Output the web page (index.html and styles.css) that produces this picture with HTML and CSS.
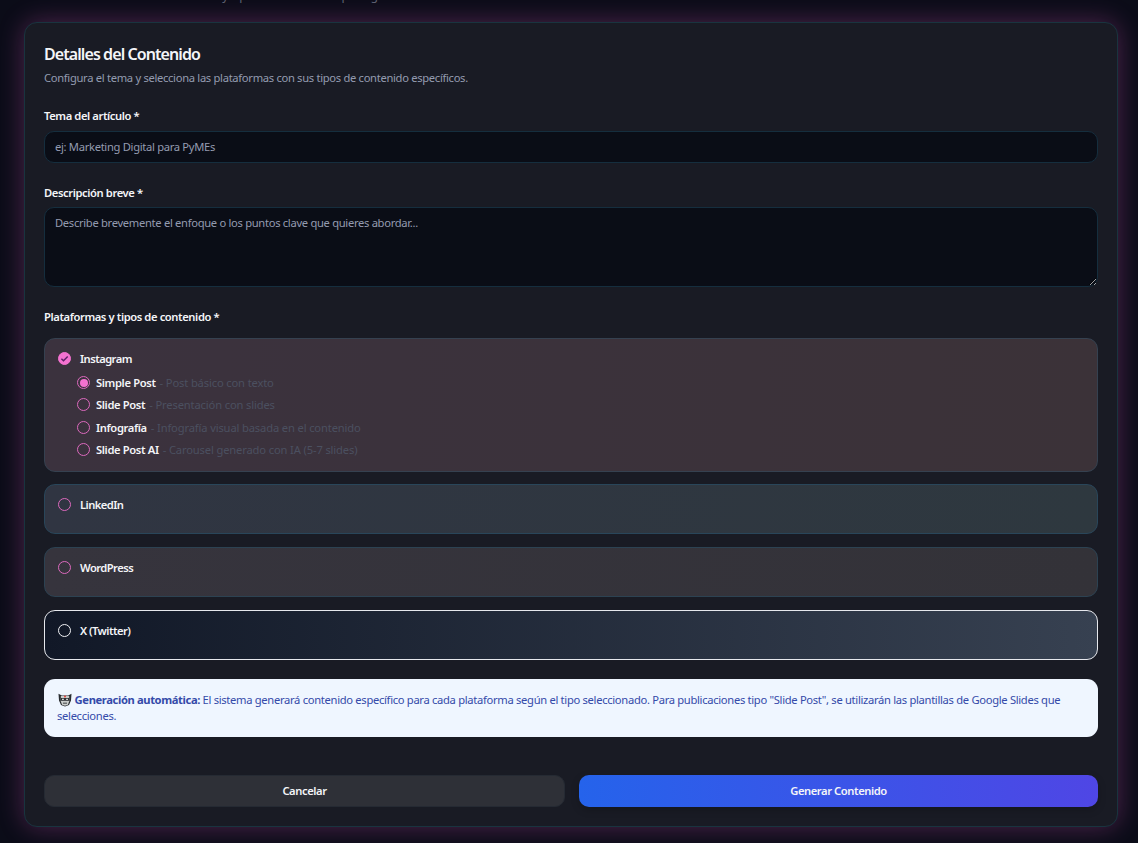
FILE: index.html
```html
<!DOCTYPE html>
<html lang="es">
<head>
    <meta charset="UTF-8">
    <meta name="viewport" content="width=device-width, initial-scale=1.0">
    <title>Generar Contenido</title>
    <link rel="stylesheet" href="styles.css">
</head>
<body>
    <p class="page-intro">Selecciona el tema del artículo y tipos de contenido para generar</p>
    <main class="card">
        <h1>Detalles del Contenido</h1>
        <p class="subtitle">Configura el tema y selecciona las plataformas con sus tipos de contenido específicos.</p>
        <form id="contentForm">
            <div class="field">
                <label for="topic">Tema del artículo *</label>
                <input type="text" id="topic" name="topic" placeholder="ej: Marketing Digital para PyMEs">
            </div>
            <div class="field">
                <label for="description">Descripción breve *</label>
                <textarea id="description" name="description" placeholder="Describe brevemente el enfoque o los puntos clave que quieres abordar..."></textarea>
            </div>
            <div class="field platforms-label">Plataformas y tipos de contenido *</div>
            <div class="platforms">
                <div class="platform instagram">
                    <div class="platform-name">
                        <span class="circle checked">
                            <svg viewBox="0 0 13 13" width="13" height="13"><path d="M3.4 6.8 5.5 8.8 9.7 4.5" fill="none" stroke="#5b2166" stroke-width="1.4"/></svg>
                        </span>
                        <span class="name">Instagram</span>
                    </div>
                    <div class="types">
                        <div class="type"><span class="circle selected"></span><span class="name">Simple Post</span><span class="hint">- Post básico con texto</span></div>
                        <div class="type"><span class="circle"></span><span class="name">Slide Post</span><span class="hint">- Presentación con slides</span></div>
                        <div class="type"><span class="circle"></span><span class="name">Infografía</span><span class="hint">- Infografía visual basada en el contenido</span></div>
                        <div class="type"><span class="circle"></span><span class="name">Slide Post AI</span><span class="hint">- Carousel generado con IA (5-7 slides)</span></div>
                    </div>
                </div>
                <div class="platform linkedin">
                    <div class="platform-name"><span class="circle"></span><span class="name">LinkedIn</span></div>
                </div>
                <div class="platform wordpress">
                    <div class="platform-name"><span class="circle"></span><span class="name">WordPress</span></div>
                </div>
                <div class="platform twitter">
                    <div class="platform-name"><span class="circle"></span><span class="name">X (Twitter)</span></div>
                </div>
            </div>
            <div class="notice">
                <svg class="robot" viewBox="0 0 14 14" width="14" height="14">
                    <path d="M.5.8 3.8 2.5h6.4L13.5.8 13 7.5 11 12 7 13.5 3 12 1 7.5Z" fill="#282b2e"/>
                    <path d="M2.8 3h8.4v5.3L10 11.7l-3 1-3-1-1.2-3.4Z" fill="#c9ccca"/>
                    <path d="M3 5h8v2.8H3Z" fill="#303336"/>
                    <path d="M4.2 5.8h1.5v1.3H4.2ZM8.3 5.8h1.5v1.3H8.3Z" fill="#fff"/>
                    <path d="M5 9.6h4v1.2H5Z" fill="#55585a"/>
                    <circle cx="7" cy="3.6" r="1" fill="#e43b35"/>
                </svg>
                <strong>Generación automática:</strong> El sistema generará contenido específico para cada plataforma según el tipo seleccionado. Para publicaciones tipo "Slide Post", se utilizarán las plantillas de Google Slides que selecciones.
            </div>
            <div class="actions">
                <button type="button" class="cancel">Cancelar</button>
                <button type="submit" class="generate">Generar Contenido</button>
            </div>
        </form>
    </main>
</body>
</html>
```
FILE: styles.css
```css
* {
    box-sizing: border-box;
}
body {
    margin: 0;
    height: 843px;
    overflow: hidden;
    background: #0b0c18;
    color: #f4f5f8;
    font-family: "Noto Sans", sans-serif;
    font-size: 11.2px;
    line-height: 16px;
    letter-spacing: -0.31px;
}
h1, p {
    margin: 0;
}
.page-intro {
    height: 22px;
    margin: -12px 0 12px 46px;
    color: #5d6070;
    font-size: 12.2px;
    letter-spacing: 0;
}
.card {
    width: 1094px;
    height: 805px;
    margin-left: 24px;
    padding: 20px 19px 19px;
    border: 1px solid #19343f;
    border-radius: 13px;
    background: #191b24;
    box-shadow: 0 0 26px rgba(224, 90, 190, 0.32);
}
h1 {
    margin-top: -1px;
    font-size: 16px;
    line-height: 24px;
    font-weight: 600;
    letter-spacing: -0.92px;
}
.subtitle {
    height: 16px;
    margin-top: 4px;
    color: #949bb0;
}
form {
    margin-top: 22px;
}
.field label {
    display: block;
    height: 16px;
    font-weight: 600;
    letter-spacing: -0.4px;
}
.field input,
.field textarea {
    display: block;
    width: 100%;
    height: 32px;
    margin-top: 7px;
    padding: 0 10px 2px;
    border: 1px solid #152e3e;
    border-radius: 10px;
    background: #0a0d16;
    color: #f4f5f8;
    font: inherit;
    letter-spacing: inherit;
}
.field textarea {
    height: 80px;
    margin-top: 6px;
    padding: 7px 10px;
    resize: vertical;
}
.field ::placeholder {
    color: #949bb0;
    opacity: 1;
}
.field + .field {
    margin-top: 22px;
}
.platforms-label {
    font-weight: 600;
    letter-spacing: -0.4px;
}
.platforms {
    display: grid;
    gap: 13px;
    margin-top: 13px;
}
.platform {
    height: 50px;
    padding: 13px;
    border: 1px solid #2c4252;
    border-radius: 11px;
}
.instagram {
    height: 134px;
    margin-bottom: -1px;
    border-color: #354150;
    background: linear-gradient(90deg, #3b323e, #3b3238);
}
.linkedin {
    background: linear-gradient(90deg, #303542, #2e383f);
    border-color: #29465a;
}
.wordpress {
    background: linear-gradient(90deg, #36343d, #333238);
}
.twitter {
    border-color: #e6e8ed;
    background: linear-gradient(90deg, #111827, #374151);
}
.platform-name,
.type {
    display: flex;
    align-items: flex-start;
    height: 14px;
    line-height: 14px;
}
.name {
    font-weight: 600;
    letter-spacing: -0.36px;
}
.platform-name .name {
    margin-left: 9px;
    letter-spacing: -0.55px;
}
.circle {
    display: flex;
    flex: none;
    width: 13px;
    height: 13px;
    border: 1px solid #dc69bd;
    border-radius: 50%;
}
.circle svg {
    flex: none;
    margin: -1px;
}
.checked {
    background: #f472d0;
    border-color: #f472d0;
}
.selected {
    padding: 1.5px;
    background: #f472d0 content-box;
}
.twitter .circle {
    border-color: #f0f1f4;
}
.types {
    display: grid;
    gap: 8.3px;
    margin: 10px 0 0 19px;
}
.type .name {
    margin-left: 6px;
}
.hint {
    margin-left: 4px;
    color: #4b5060;
    letter-spacing: -0.15px;
}
.notice {
    height: 58px;
    margin-top: 19px;
    padding: 13px;
    border-radius: 11px;
    background: #eff6ff;
    color: #344aa9;
}
.notice strong {
    font-weight: 700;
    letter-spacing: -0.38px;
}
.robot {
    margin-left: 1px;
    vertical-align: -3px;
}
.actions {
    display: grid;
    grid-template-columns: 521px 519px;
    gap: 14px;
    margin-top: 38px;
}
button {
    height: 32px;
    padding: 0;
    border: none;
    border-radius: 10px;
    color: #f4f5f8;
    font: inherit;
    font-weight: 600;
    letter-spacing: -0.42px;
}
.cancel {
    border: 1px solid #252a33;
    background: #2e3037;
}
.generate {
    background: linear-gradient(90deg, #2563eb, #4f46e5);
    box-shadow: 0 3px 8px rgba(0, 0, 0, 0.2);
}
```
